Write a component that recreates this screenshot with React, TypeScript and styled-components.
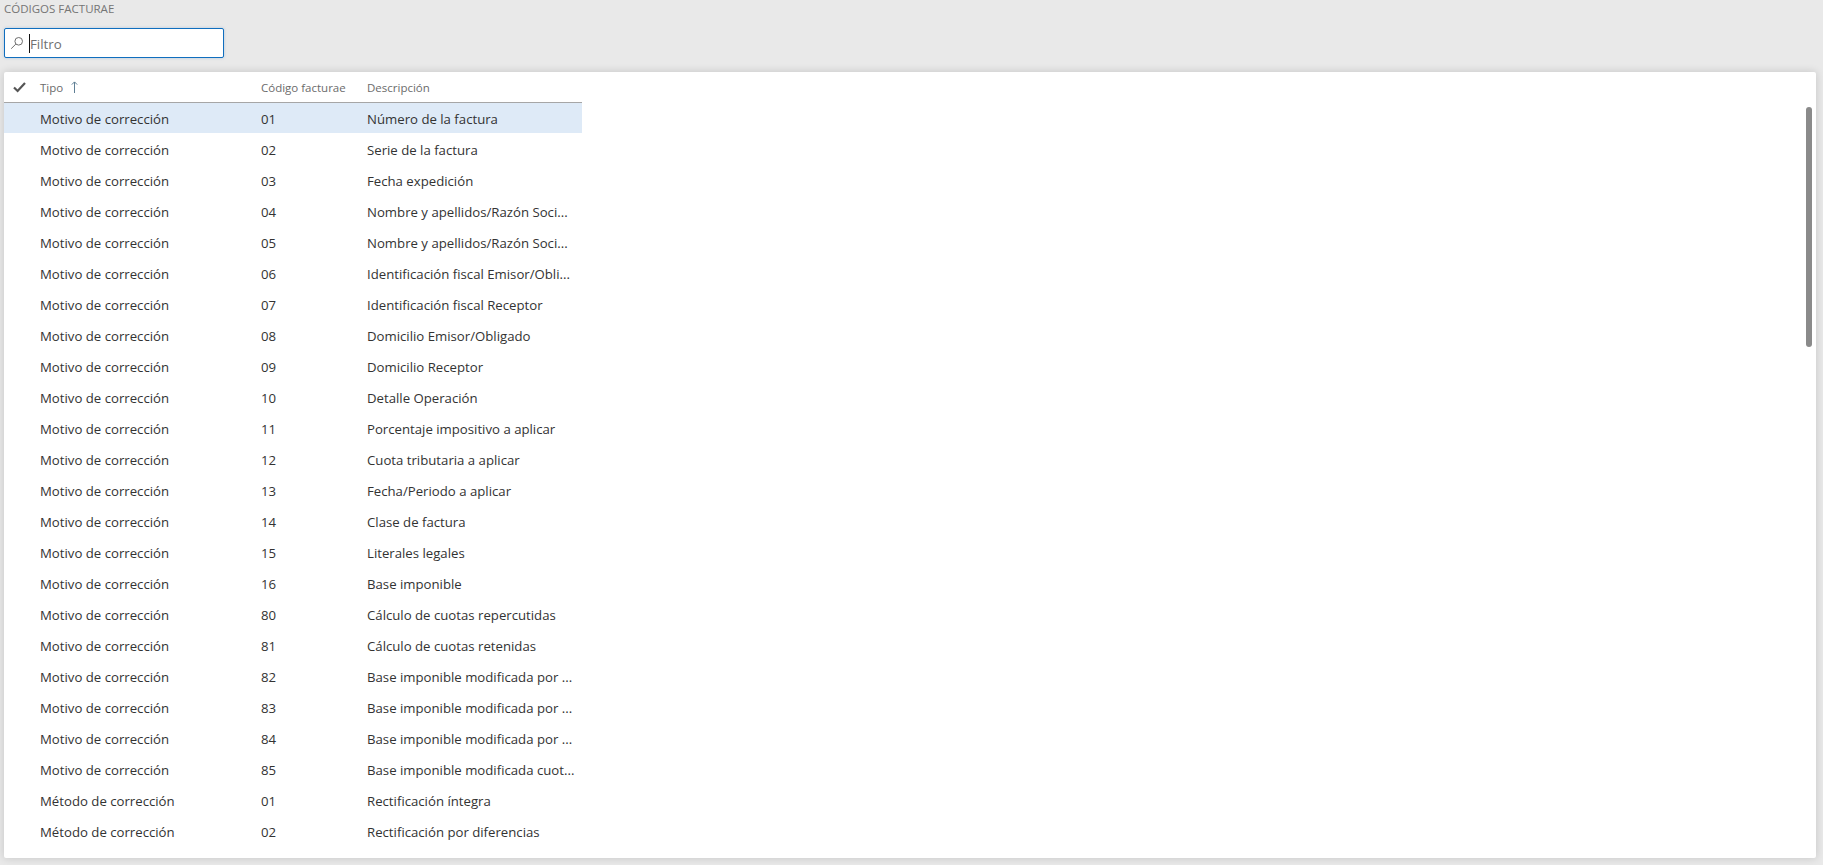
import React from "react";
import styled, { createGlobalStyle } from "styled-components";

const FONT = `"Open Sans", "Noto Sans", "Liberation Sans", sans-serif`;

const Global = createGlobalStyle`
  html, body { margin: 0; padding: 0; height: 100%; }
  body { background: #e9e9e9; font-family: ${FONT}; overflow: hidden; }
`;

const Page = styled.div`
  width: 1823px;
  height: 865px;
  display: flex;
  flex-direction: column;
  padding: 0 7px 7px 4px;
  box-sizing: border-box;
`;

const Title = styled.div`
  height: 28px;
  padding-top: 1px;
  box-sizing: border-box;
  font-size: 11.5px;
  line-height: 16px;
  color: #757575;
`;

const FilterBox = styled.div`
  width: 220px;
  height: 30px;
  box-sizing: border-box;
  border: 1px solid #106ebe;
  border-radius: 2px;
  background: #fff;
  display: flex;
  align-items: center;
  padding-left: 5px;
  gap: 5px;
  box-shadow: 0 0 3px rgba(16, 110, 190, 0.25);
`;

const Caret = styled.span`
  width: 1px;
  height: 19px;
  background: #111;
`;

const FilterText = styled.span`
  font-size: 13.3px;
  color: #707070;
  margin-left: -5px;
  padding-top: 1px;
`;

const Card = styled.div`
  margin-top: 14px;
  flex: 1;
  background: #fff;
  border-radius: 2px;
  box-shadow: 0 0 8px rgba(0, 0, 0, 0.16);
  position: relative;
`;

const Table = styled.div`
  width: 578px;
`;

const HeaderRow = styled.div`
  height: 31px;
  box-sizing: border-box;
  display: grid;
  grid-template-columns: 36px 221px 106px 1fr;
  align-items: center;
  border-bottom: 1px solid #a6a6a6;
  font-size: 11.5px;
  color: #6b6b6b;
`;

const Row = styled.div<{ $selected?: boolean }>`
  height: 31px;
  box-sizing: border-box;
  padding-top: 1px;
  display: grid;
  grid-template-columns: 36px 221px 106px 1fr;
  align-items: center;
  font-size: 13.2px;
  color: #333;
  border-bottom: 1px solid transparent;
  background: ${(p) => (p.$selected ? "#deeaf7" : "transparent")};
  background-clip: padding-box;
`;

const CheckCell = styled.span`
  display: flex;
  padding-left: 9px;
`;

const HeadLabel = styled.span`
  display: flex;
  align-items: center;
  gap: 8px;
`;

const Cell = styled.span`
  white-space: nowrap;
  overflow: hidden;
`;

const Scrollbar = styled.div`
  position: absolute;
  top: 35px;
  right: 4px;
  width: 6px;
  height: 240px;
  border-radius: 3px;
  background: #8a8a8a;
`;

const rows: [string, string, string][] = [
  ["Motivo de corrección", "01", "Número de la factura"],
  ["Motivo de corrección", "02", "Serie de la factura"],
  ["Motivo de corrección", "03", "Fecha expedición"],
  ["Motivo de corrección", "04", "Nombre y apellidos/Razón Soci..."],
  ["Motivo de corrección", "05", "Nombre y apellidos/Razón Soci..."],
  ["Motivo de corrección", "06", "Identificación fiscal Emisor/Obli..."],
  ["Motivo de corrección", "07", "Identificación fiscal Receptor"],
  ["Motivo de corrección", "08", "Domicilio Emisor/Obligado"],
  ["Motivo de corrección", "09", "Domicilio Receptor"],
  ["Motivo de corrección", "10", "Detalle Operación"],
  ["Motivo de corrección", "11", "Porcentaje impositivo a aplicar"],
  ["Motivo de corrección", "12", "Cuota tributaria a aplicar"],
  ["Motivo de corrección", "13", "Fecha/Periodo a aplicar"],
  ["Motivo de corrección", "14", "Clase de factura"],
  ["Motivo de corrección", "15", "Literales legales"],
  ["Motivo de corrección", "16", "Base imponible"],
  ["Motivo de corrección", "80", "Cálculo de cuotas repercutidas"],
  ["Motivo de corrección", "81", "Cálculo de cuotas retenidas"],
  ["Motivo de corrección", "82", "Base imponible modificada por ..."],
  ["Motivo de corrección", "83", "Base imponible modificada por ..."],
  ["Motivo de corrección", "84", "Base imponible modificada por ..."],
  ["Motivo de corrección", "85", "Base imponible modificada cuot..."],
  ["Método de corrección", "01", "Rectificación íntegra"],
  ["Método de corrección", "02", "Rectificación por diferencias"],
];

export default function App() {
  return (
    <Page>
      <Global />
      <Title>CÓDIGOS FACTURAE</Title>
      <FilterBox>
        <svg width="14" height="14" viewBox="0 0 14 14" fill="none" stroke="#6e6e6e" strokeWidth="1">
          <circle cx="8.7" cy="5.3" r="3.8" />
          <path d="M5.9 8 L1.2 12.7" />
        </svg>
        <Caret />
        <FilterText>Filtro</FilterText>
      </FilterBox>
      <Card>
        <Table>
          <HeaderRow>
            <CheckCell>
              <svg width="13" height="11" viewBox="0 0 13 11" fill="none" stroke="#555" strokeWidth="2.2">
                <path d="M1 5.5 L4.6 9 L12 1" />
              </svg>
            </CheckCell>
            <HeadLabel>
              Tipo
              <svg width="7" height="12" viewBox="0 0 7 12" fill="none" stroke="#5f7f95" strokeWidth="1">
                <path d="M3.5 12 V1 M0.8 3.6 L3.5 0.9 L6.2 3.6" />
              </svg>
            </HeadLabel>
            <Cell>Código facturae</Cell>
            <Cell>Descripción</Cell>
          </HeaderRow>
          {rows.map(([tipo, code, desc], i) => (
            <Row key={i} $selected={i === 0}>
              <span />
              <Cell>{tipo}</Cell>
              <Cell>{code}</Cell>
              <Cell>{desc}</Cell>
            </Row>
          ))}
        </Table>
        <Scrollbar />
      </Card>
    </Page>
  );
}
